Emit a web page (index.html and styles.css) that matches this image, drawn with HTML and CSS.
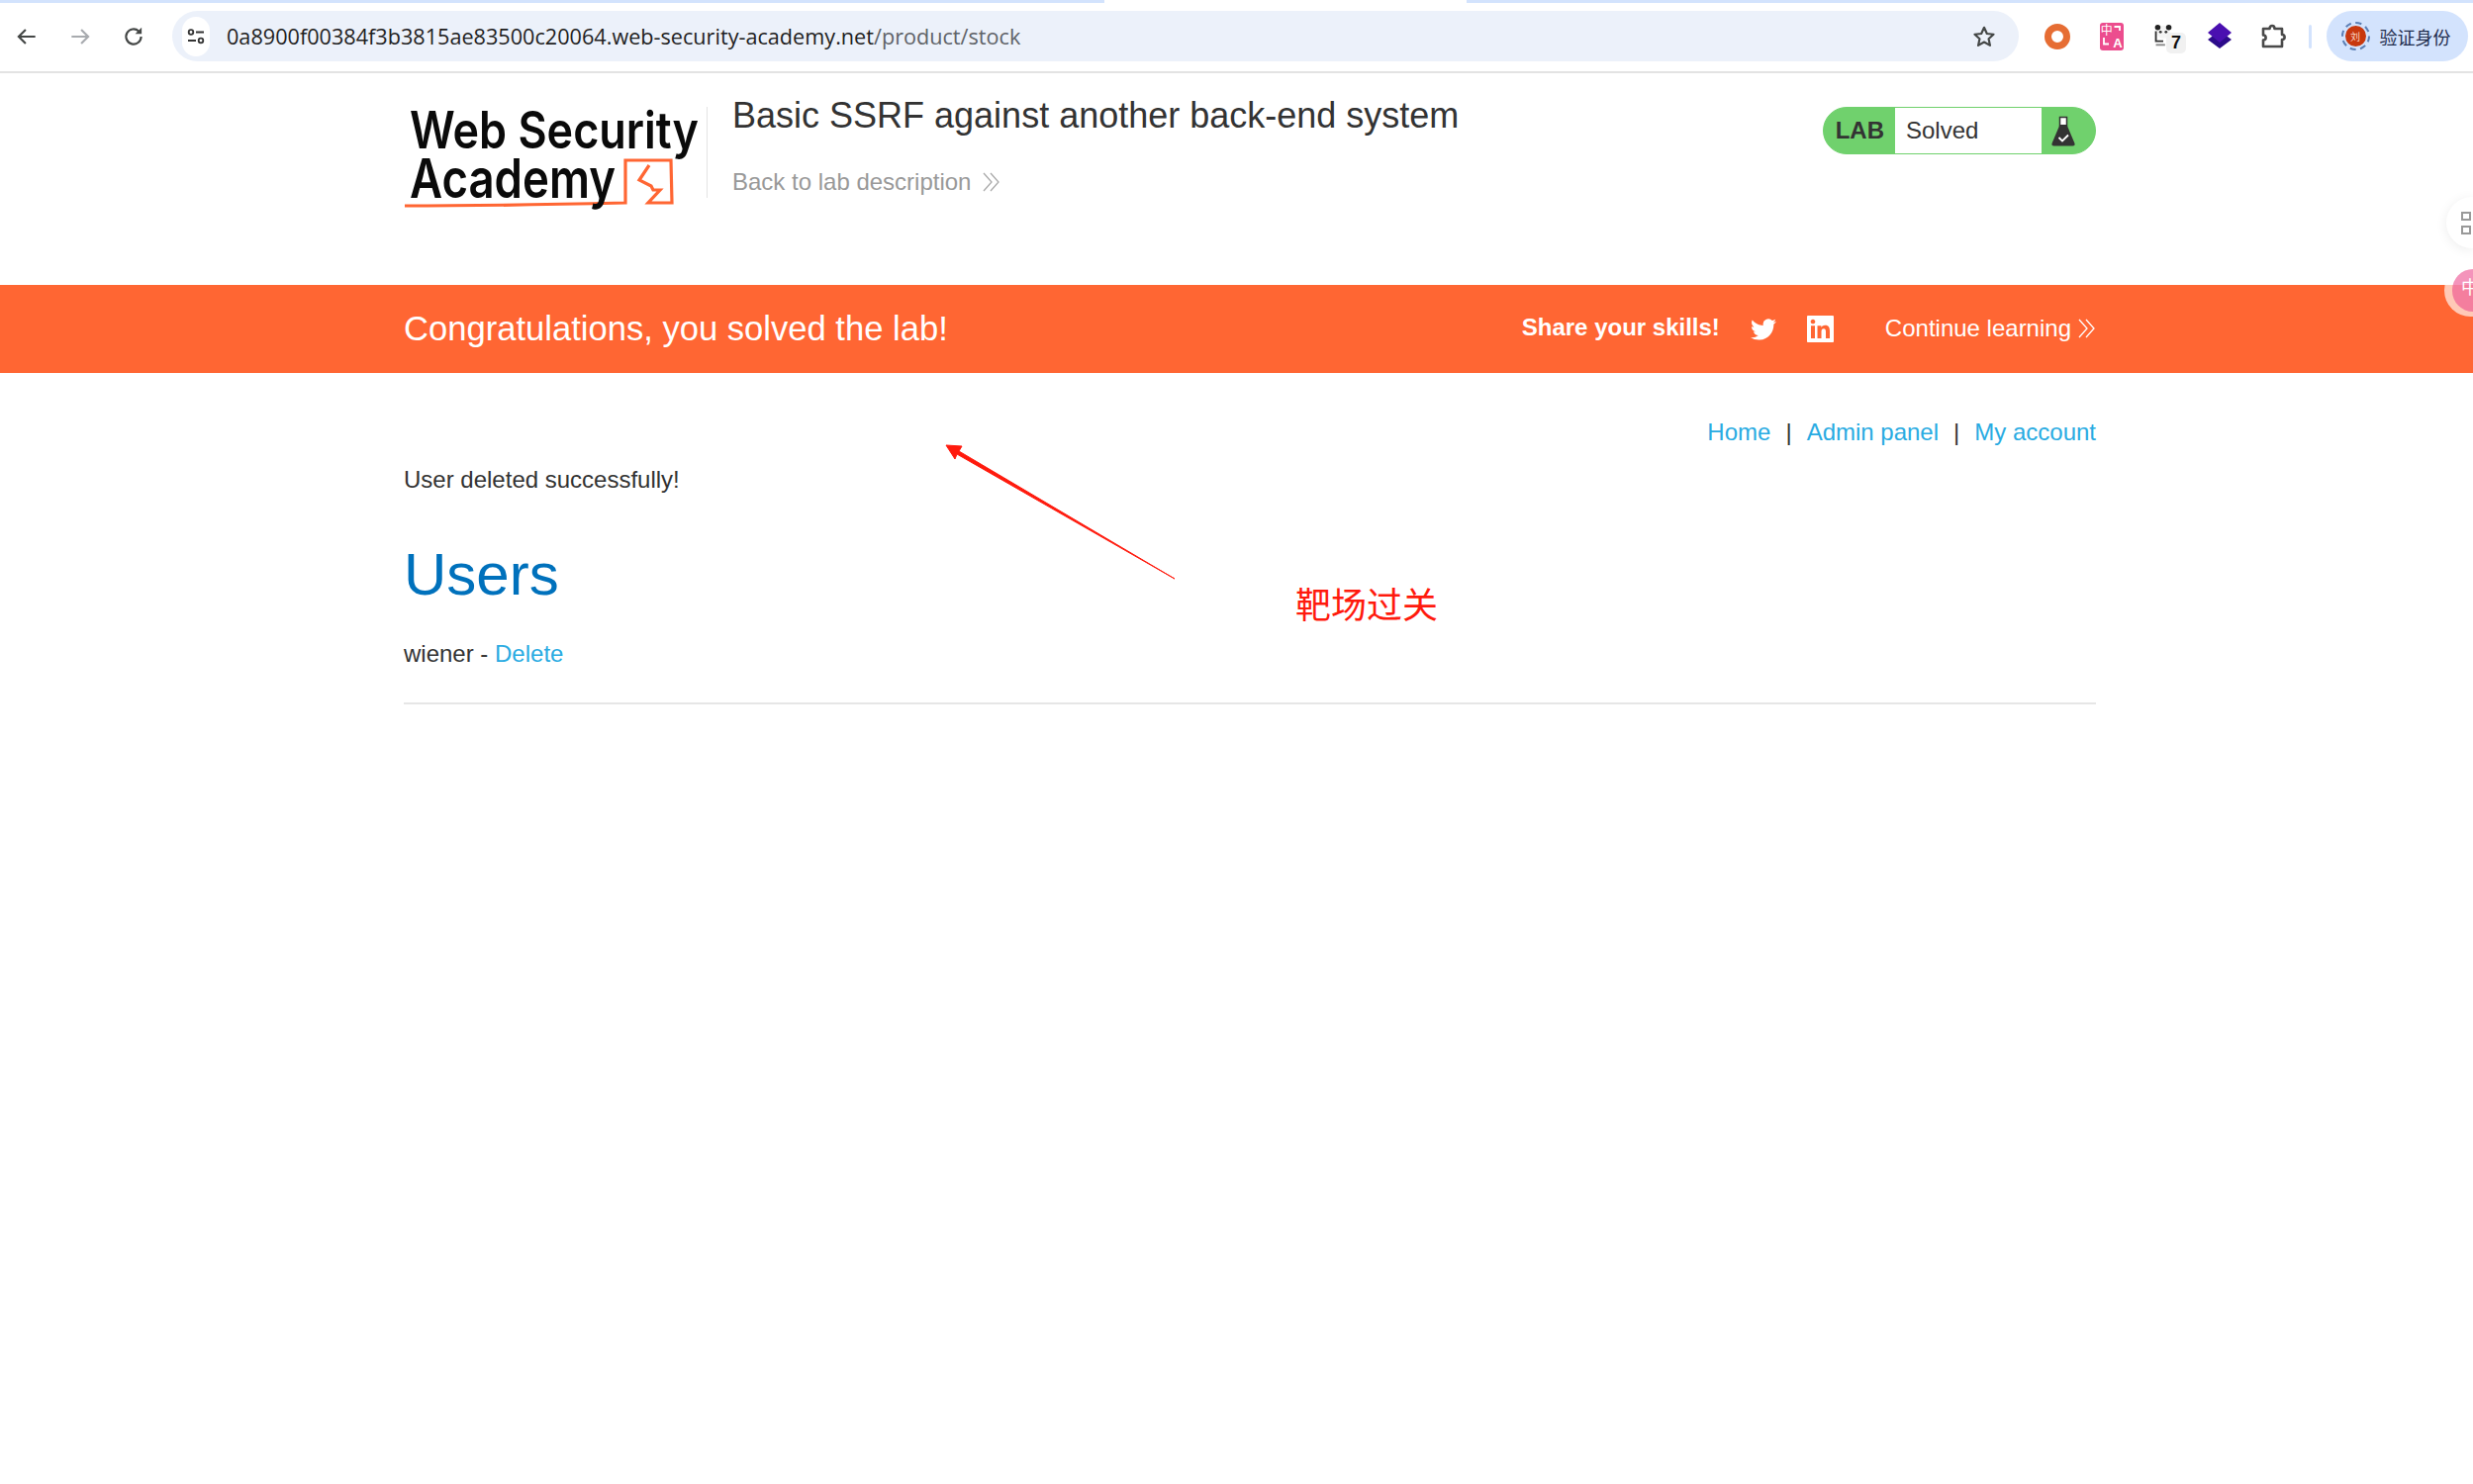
FILE: index.html
```html
<!DOCTYPE html>
<html lang="en">
<head>
<meta charset="utf-8">
<title>Basic SSRF against another back-end system</title>
<link rel="stylesheet" href="styles.css">
</head>
<body>
<div class="tabstrip"><span class="tab-seg tab-left"></span><span class="tab-gap"></span><span class="tab-seg tab-right"></span></div>
<div class="toolbar">
  <svg class="nav-icon" viewBox="0 0 24 24"><path d="M20 12H5M11 5.500 4.500 12l6.500 6.500" fill="none" stroke="#444746" stroke-width="2"/></svg>
  <svg class="nav-icon" viewBox="0 0 24 24"><path d="M4 12h15M13 5.500l6.500 6.500-6.500 6.500" fill="none" stroke="#a8abaf" stroke-width="2"/></svg>
  <svg class="nav-icon" viewBox="0 0 24 24"><path d="M19 12a7 7 0 1 1-2.200-5.100" fill="none" stroke="#444746" stroke-width="2"/><path d="M19.500 3.500v6h-6z" fill="#444746"/></svg>
  <div class="omnibox">
    <span class="tune"><svg viewBox="0 0 20 20" class="tune-svg"><circle cx="5" cy="5.500" r="2.300" fill="none" stroke="#333" stroke-width="1.800"/><path d="M10 5.500h8M2 14h8" stroke="#333" stroke-width="1.800"/><circle cx="15" cy="14" r="2.300" fill="none" stroke="#333" stroke-width="1.800"/></svg></span>
    <span class="url"><span class="url-host">0a8900f00384f3b3815ae83500c20064.web-security-academy.net</span>/product/stock</span>
    <svg class="star" viewBox="0 0 24 24"><path d="M12 3.500l2.600 5.700 6.200.700-4.600 4.200 1.300 6.100L12 17.100l-5.500 3.100 1.300-6.100-4.600-4.200 6.200-.700z" fill="none" stroke="#444746" stroke-width="2" stroke-linejoin="round"/></svg>
  </div>
  <div class="extensions">
    <span class="ext"><svg viewBox="0 0 28 28" class="ext-svg"><circle cx="14" cy="14" r="9.500" fill="none" stroke="#e66d33" stroke-width="7"/></svg></span>
    <span class="ext"><span class="translate"><svg class="tr-brackets" viewBox="0 0 24 28"><path d="M14.500 4H20V8M4 15v6.500H9" fill="none" stroke="#fff" stroke-width="1.800"/></svg><span class="tr-zh">中</span><span class="tr-a">A</span></span></span>
    <span class="ext ext-panda">
      <svg viewBox="0 0 28 28" class="ext-svg"><circle cx="14" cy="9" r="7" fill="#f4f4f4"/><circle cx="8" cy="4" r="3" fill="#222"/><circle cx="20" cy="4" r="3" fill="#222"/><circle cx="11" cy="9" r="1.500" fill="#333"/><circle cx="17" cy="9" r="1.500" fill="#333"/><path d="M6 8v11h8" fill="none" stroke="#333" stroke-width="2"/><path d="M6 23h10" stroke="#888" stroke-width="2"/></svg>
      <span class="badge-seven">7</span>
    </span>
    <span class="ext"><svg viewBox="0 0 28 28" class="ext-svg"><path d="M14 8 26 17 14 26 2 17z" fill="#2c0b8a"/><path d="M14 0 26 10 14 20 2 10z" fill="#4a0fb0"/></svg></span>
    <span class="ext"><svg viewBox="0 0 28 28" class="ext-svg"><path d="M4 6h6.500c0-4 5-4 5 0H23v6c3.500 0 3.500 5 0 5v7H4v-6.500c3.500 0 3.500-5 0-5z" fill="none" stroke="#4a4a4a" stroke-width="2.600" stroke-linejoin="round"/></svg></span>
  </div>
  <span class="tool-divider"></span>
  <div class="profile">
    <span class="avatar"><span class="avatar-inner">刘</span></span>
    <span class="profile-name">验证身份</span>
  </div>
</div>

<div class="page">
  <header class="lab-header">
    <svg class="logo" viewBox="408 86 302 136">
      <path d="M409 208Q500 208 632 205V162H678L679 205H655L667 192H660L658 188 646 182 656 167" fill="none" stroke="#ff6633" stroke-width="3.200"/>
      <text x="414" y="150" class="logo-text logo-line-one" textLength="292" lengthAdjust="spacingAndGlyphs">Web Security</text>
      <text x="414" y="200" class="logo-text logo-line-two" textLength="208" lengthAdjust="spacingAndGlyphs">Academy</text>
    </svg>
    <span class="logo-divider"></span>
    <div class="lab-title">
      <h2 class="title-text">Basic SSRF against another back-end system</h2>
      <a class="back-link">Back to lab description
        <svg class="chev chev-grey" viewBox="0 0 18 20"><path d="M1 1l8 9-8 9M8 1l8 9-8 9" fill="none" stroke="#aaa" stroke-width="1.300"/></svg>
      </a>
    </div>
    <div class="status">
      <span class="status-lab">LAB</span>
      <span class="status-text">Solved</span>
      <span class="status-icon"><svg viewBox="0 0 24 31" class="flask"><path d="M8.500 1.500h7v9h-7z" fill="#fff" stroke="#333" stroke-width="1.500"/><path d="M8.500 9h7L23.500 28q.5 2.500-2 2.500h-19q-2.500 0-2-2.500z" fill="#333"/><path d="M7.500 22l3.500 3.500 6-6" fill="none" stroke="#fff" stroke-width="1.800"/></svg></span>
    </div>
  </header>
</div>

<section class="banner">
  <div class="banner-inner">
    <h4 class="congrats">Congratulations, you solved the lab!</h4>
    <div class="banner-right">
      <span class="share">Share your skills!</span>
      <svg class="tw" viewBox="0 0 24 24"><path fill="#fff" d="M23.953 4.570a10 10 0 01-2.825.775 4.958 4.958 0 002.163-2.723c-.951.555-2.005.959-3.127 1.184a4.920 4.920 0 00-8.384 4.482C7.690 8.095 4.067 6.130 1.640 3.162a4.822 4.822 0 00-.666 2.475c0 1.710.870 3.213 2.188 4.096a4.904 4.904 0 01-2.228-.616v.060a4.923 4.923 0 003.946 4.827 4.996 4.996 0 01-2.212.085 4.936 4.936 0 004.604 3.417 9.867 9.867 0 01-6.102 2.105c-.390 0-.779-.023-1.170-.067a13.995 13.995 0 007.557 2.209c9.053 0 13.998-7.496 13.998-13.985 0-.210 0-.420-.015-.630A9.935 9.935 0 0024 4.590z"/></svg>
      <svg class="li" viewBox="0 0 24 24"><path fill="#fff" d="M20.447 20.452h-3.554v-5.569c0-1.328-.027-3.037-1.852-3.037-1.853 0-2.136 1.445-2.136 2.939v5.667H9.351V9h3.414v1.561h.046c.477-.9 1.637-1.850 3.370-1.850 3.601 0 4.267 2.370 4.267 5.455v6.286zM5.337 7.433c-1.144 0-2.063-.926-2.063-2.065 0-1.138.920-2.063 2.063-2.063 1.140 0 2.064.925 2.064 2.063 0 1.139-.925 2.065-2.064 2.065zm1.782 13.019H3.555V9h3.564v11.452zM23 0H1C.4 0 0 .4 0 1v22c0 .6.400 1 1 1h22c.6 0 1-.4 1-1V1c0-.6-.4-1-1-1z"/></svg>
      <a class="continue">Continue learning
        <svg class="chev chev-white" viewBox="0 0 18 20"><path d="M1 1l8 9-8 9M8 1l8 9-8 9" fill="none" stroke="#fff" stroke-width="1.300"/></svg>
      </a>
    </div>
  </div>
</section>

<main class="page content">
  <nav class="top-links"><a>Home</a><span class="sep">|</span><a>Admin panel</a><span class="sep">|</span><a>My account</a></nav>
  <p class="message">User deleted successfully!</p>
  <h1 class="users-title">Users</h1>
  <p class="user-row">wiener - <a>Delete</a></p>
  <hr class="rule">
</main>

<svg class="annot-arrow" viewBox="950 445 245 145"><path d="M956 450 972 451 969 456 1187 585 967 459 965 464z" fill="#ff1a0d" stroke="#ff1a0d" stroke-width="1"/></svg>
<span class="annot-text">靶场过关</span>

<span class="float-grid"><span class="sq"></span><span class="sq"></span></span>
<span class="float-pink"><span class="float-pink-inner">中</span></span>
</body>
</html>
```
FILE: styles.css
```css
* { box-sizing: border-box; }
html, body { margin: 0; padding: 0; background: #fff; overflow-x: hidden; }
body {
  position: relative;
  min-height: 1500px;
  font-family: "Liberation Sans", Arial, sans-serif;
  color: #333;
  font-size: 24px;
}
a { color: #29abe2; text-decoration: none; }

/* browser chrome */
.tabstrip { display: flex; height: 3px; }
.tab-seg { background: #d3e3fd; }
.tab-left { width: 1116px; }
.tab-gap { width: 366px; }
.tab-right { flex: 1; }
.toolbar {
  display: flex;
  align-items: center;
  height: 71px;
  padding: 0 5px 2px 0;
  border-bottom: 2px solid #e3e3e3;
}
.nav-icon { width: 26px; height: 26px; margin-left: 14px; margin-right: 14px; flex: none; }
.omnibox {
  display: flex;
  align-items: center;
  width: 1866px;
  height: 51px;
  margin-left: 12px;
  padding: 0 13px 0 10px;
  border-radius: 26px;
  background: #ecf1fa;
}
.tune {
  display: flex;
  align-items: center;
  justify-content: center;
  width: 28px;
  height: 40px;
  border-radius: 14px;
  background: #fff;
}
.tune-svg { width: 20px; height: 20px; }
.url {
  flex: 1;
  margin-left: 17px;
  font-family: "Open Sans", sans-serif;
  font-size: 21.650px;
  color: #5f6368;
  white-space: nowrap;
}
.url-host { color: #1f1f1f; }
.star { width: 26px; height: 26px; margin-right: 9px; }
.extensions { display: flex; align-items: center; margin-left: 12px; }
.ext {
  position: relative;
  display: flex;
  align-items: center;
  justify-content: center;
  width: 54.500px;
  height: 30px;
}
.ext-svg { width: 28px; height: 28px; }
.translate {
  position: relative;
  display: block;
  width: 24px;
  height: 28px;
  border-radius: 3px;
  background: #ec4d8e;
  color: #fff;
  font-family: "Noto Sans CJK SC", sans-serif;
  line-height: 1;
}
.tr-brackets { position: absolute; left: 0; top: 0; width: 24px; height: 28px; }
.tr-zh { position: absolute; left: 1px; top: 1px; font-size: 12px; }
.tr-a { position: absolute; right: 1px; top: 13px; font: bold 13px "Liberation Sans", sans-serif; }
.ext-panda .ext-svg { width: 26px; height: 26px; margin-right: 4px; }
.badge-seven {
  position: absolute;
  left: 28px;
  top: 11px;
  width: 20px;
  height: 21px;
  border-radius: 5px;
  background: #f1f1f1;
  color: #111;
  font: bold 18px/21px "Liberation Sans", sans-serif;
  text-align: center;
}
.tool-divider { width: 3px; height: 24px; margin-left: 8px; border-radius: 2px; background: #d3e3fd; }
.profile {
  display: flex;
  align-items: center;
  width: 143px;
  height: 51px;
  margin-left: 15px;
  padding-left: 15px;
  border-radius: 26px;
  background: #d3e3fd;
}
.avatar {
  display: flex;
  align-items: center;
  justify-content: center;
  width: 29px;
  height: 29px;
  border: 2px dashed #5b7fb5;
  border-radius: 50%;
}
.avatar-inner {
  width: 21px;
  height: 21px;
  border-radius: 50%;
  background: #c8380e;
  color: #fbd9c8;
  font: 10px/21px "Noto Sans CJK SC", sans-serif;
  text-align: center;
}
.profile-name {
  margin-left: 10px;
  font: 18px/1 "Noto Sans CJK SC", sans-serif;
  color: #1f2d4d;
  white-space: nowrap;
}

/* lab header */
.page { margin: 0 381px 0 408px; }
.lab-header { display: flex; align-items: flex-start; height: 214px; }
.logo { width: 302px; height: 136px; margin-top: 12px; flex: none; overflow: visible; }
.logo-text { font-family: Inter, sans-serif; font-weight: 600; fill: #0a0a0a; }
.logo-line-one { font-size: 52px; }
.logo-line-two { font-size: 55px; }
.logo-divider { width: 1px; height: 92px; margin: 34px 0 0 4px; background: #e4e4e4; flex: none; }
.lab-title { margin: 23px 0 0 25px; flex: 1; }
.title-text { margin: 0; font-size: 36px; font-weight: 400; line-height: 40px; color: #333; white-space: nowrap; }
.back-link { display: flex; align-items: center; margin-top: 32px; color: #999; line-height: 30px; white-space: nowrap; }
.chev { flex: none; }
.chev-grey { width: 18px; height: 20px; margin-left: 12px; }
.status {
  display: flex;
  width: 276px;
  height: 48px;
  margin-top: 34px;
  border: 1px solid #70d16d;
  border-radius: 24px;
  background: #70d16d;
  flex: none;
}
.status-lab { width: 72px; font-weight: 700; line-height: 46px; text-align: right; padding-right: 11px; color: #333; }
.status-text { width: 148px; padding-left: 11px; background: #fff; line-height: 45px; color: #333; }
.status-icon { flex: 1; display: flex; align-items: center; justify-content: center; padding-right: 10px; }
.flask { width: 24px; height: 31px; }

/* banner */
.banner { height: 89px; background: #ff6633; }
.banner-inner { display: flex; align-items: center; justify-content: space-between; height: 100%; margin: 0 381px 0 408px; color: #fff; }
.congrats { margin: 0; font-size: 34.600px; font-weight: 400; white-space: nowrap; }
.banner-right { display: flex; align-items: center; }
.share { font-weight: 700; margin-bottom: 4px; white-space: nowrap; }
.tw { width: 28px; height: 26px; margin-left: 30px; }
.li { width: 27px; height: 27px; margin-left: 30px; }
.continue { display: flex; align-items: center; margin-left: 52px; margin-bottom: 1px; color: #fff; white-space: nowrap; }
.chev-white { width: 18px; height: 20px; margin-left: 7px; }

/* content */
.content { padding-top: 45px; }
.top-links { display: flex; justify-content: flex-end; line-height: 30px; }
.sep { margin: 0 15px; color: #333; }
.message { margin: 18px 0 0; line-height: 30px; }
.users-title { margin: 46px 0 0; font-size: 60px; font-weight: 400; line-height: 70px; color: #0071bc; }
.user-row { margin: 30px 0 0; line-height: 30px; }
.rule { height: 2px; margin: 34px 0 0; border: 0; background: #e6e6e6; }

/* overlays */
.annot-arrow { position: absolute; left: 950px; top: 445px; width: 245px; height: 145px; }
.annot-text {
  position: absolute;
  left: 1309px;
  top: 585px;
  font: 36px/48px "Noto Sans CJK SC", sans-serif;
  color: #ff1a0d;
  white-space: nowrap;
}
.float-grid {
  position: absolute;
  right: 0;
  top: 199px;
  display: flex;
  flex-direction: column;
  gap: 5px;
  justify-content: center;
  width: 27px;
  height: 52px;
  padding-left: 15px;
  border-radius: 26px 0 0 26px;
  background: #fff;
  box-shadow: 0 2px 12px rgba(0,0,0,.08);
}
.sq { width: 10px; height: 9px; border: 2px solid #999; }
.float-pink {
  position: absolute;
  right: 0;
  top: 267px;
  width: 29px;
  height: 53px;
  padding: 5px 0 5px 8px;
  border-radius: 27px 0 0 27px;
  background: rgba(255,255,255,.65);
}
.float-pink-inner {
  display: block;
  height: 43px;
  padding: 8px 0 0 9px;
  border-radius: 22px 0 0 22px;
  background: rgba(236,77,142,.6);
  color: #fff;
  font: 18px/1 "Noto Sans CJK SC", sans-serif;
  overflow: hidden;
  white-space: nowrap;
}
```
